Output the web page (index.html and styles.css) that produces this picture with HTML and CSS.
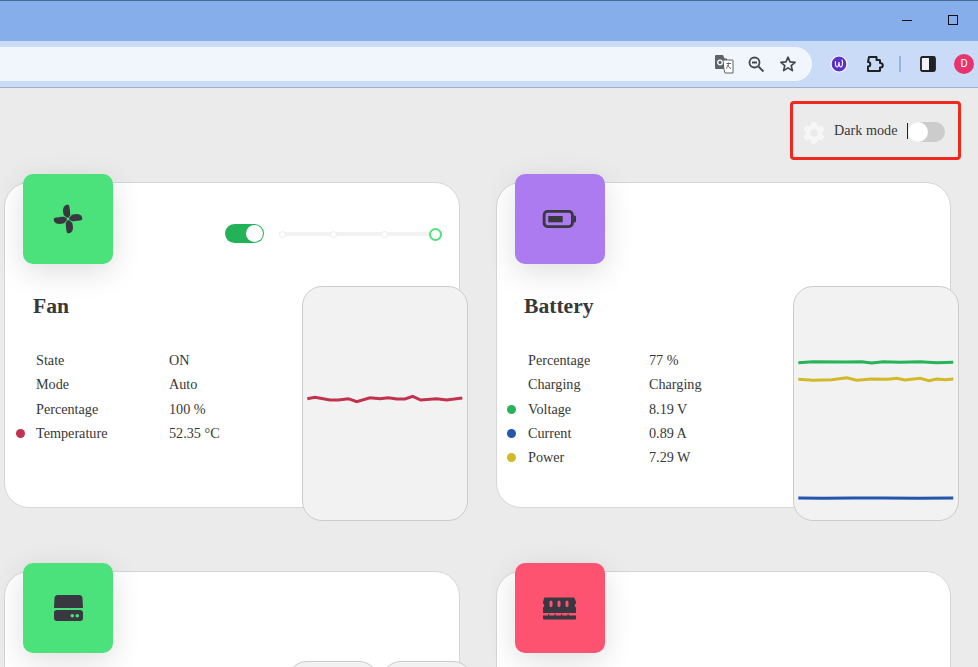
FILE: index.html
```html
<!doctype html>
<html lang="en">

<head>
    <meta charset="UTF-8">
    <meta name="viewport" content="width=device-width, initial-scale=1.0">
    <title>Dashboard</title>
    <link rel="stylesheet" href="styles.css">
</head>

<body>
    <div class="titlebar">
        <span class="win-min"></span>
        <span class="win-max"></span>
    </div>

    <div class="toolbar">
        <div class="omnibox">
            <svg class="tb-icon" viewBox="0 0 24 24">
                <path class="ink-grey" d="M4 3h7l1.500 3.500H15V17H4a1 1 0 0 1-1-1V4a1 1 0 0 1 1-1z" />
                <path class="ink-white" d="M11 8h9.500a.5.500 0 0 1 .5.500V21h-8l-1-3.500z" stroke="#5f6368" stroke-width="1" />
                <circle cx="8" cy="10.500" r="2.300" fill="none" stroke="#fff" stroke-width="1.300" />
                <path d="M14.500 11.500h4.500M16.500 10.500c.2 3-1 5-2.500 6M15.500 13c.8 1.800 2 3 3.500 3.500" fill="none" stroke="#5f6368" stroke-width="1" />
            </svg>
            <svg class="tb-icon" viewBox="0 0 24 24">
                <circle cx="10.500" cy="10.500" r="5" fill="none" stroke="#45494e" stroke-width="1.800" />
                <path d="M8 10.500h5M14.500 14.500l5 5" fill="none" stroke="#45494e" stroke-width="1.800" />
            </svg>
            <svg class="tb-icon" viewBox="0 0 24 24">
                <path d="M12 5.200l2 4.700 5.100.4-3.900 3.300 1.200 5-4.400-2.700-4.400 2.700 1.200-5-3.900-3.300 5.100-.4z" fill="none" stroke="#45494e" stroke-width="1.700" stroke-linejoin="round" />
            </svg>
        </div>
        <svg class="tb-icon ext" viewBox="0 0 24 24">
            <circle cx="12" cy="12" r="8" fill="#5a32c6" stroke="#fff" stroke-width="1.200" />
            <path d="M8.500 9.500c-.3 3 .3 5.500 1.500 5.500s1.800-2.500 2-5c.1 2.500.6 5 1.800 5 1.500 0 2.400-4 1.200-7" fill="none" stroke="#fff" stroke-width="1.100" stroke-linecap="round" />
        </svg>
        <svg class="tb-icon puzzle" viewBox="0 0 24 24">
            <path d="M6 5h7.500v3h3a.5.500 0 0 1 .5.500v2.500h.5a2.300 2.300 0 0 1 0 4.600H17v3a.5.500 0 0 1-.5.500H5v-4.500a2.300 2.300 0 0 0 0-4.600z" fill="none" stroke="#202124" stroke-width="2" stroke-linejoin="round" />
        </svg>
        <span class="tb-divider"></span>
        <svg class="tb-icon panel" viewBox="0 0 24 24">
            <rect x="5" y="5" width="14" height="14" rx="1.500" fill="#f1f5fb" stroke="#202124" stroke-width="1.800" />
            <path d="M13 5h4.500A1.500 1.500 0 0 1 19 6.500v11a1.500 1.500 0 0 1-1.500 1.500H13z" fill="#202124" />
        </svg>
        <span class="avatar">D</span>
    </div>

    <main class="page">
        <div class="topline">
            <div class="darkbox">
                <svg class="gear" viewBox="0 0 24 24">
                    <path d="M12,15.5A3.5,3.5 0 0,1 8.5,12A3.5,3.5 0 0,1 12,8.5A3.5,3.5 0 0,1 15.5,12A3.5,3.5 0 0,1 12,15.5M19.43,12.97C19.47,12.65 19.5,12.33 19.5,12C19.5,11.67 19.47,11.34 19.43,11L21.54,9.37C21.73,9.22 21.78,8.95 21.66,8.73L19.66,5.27C19.54,5.05 19.27,4.96 19.05,5.05L16.56,6.05C16.04,5.66 15.5,5.32 14.87,5.07L14.5,2.42C14.46,2.18 14.25,2 14,2H10C9.75,2 9.54,2.18 9.5,2.42L9.13,5.07C8.5,5.32 7.96,5.66 7.44,6.05L4.95,5.05C4.73,4.96 4.46,5.05 4.34,5.27L2.34,8.73C2.21,8.95 2.27,9.22 2.46,9.37L4.57,11C4.53,11.34 4.5,11.67 4.5,12C4.5,12.33 4.53,12.65 4.57,12.97L2.46,14.63C2.27,14.78 2.21,15.05 2.34,15.27L4.34,18.73C4.46,18.95 4.73,19.03 4.95,18.95L7.44,17.94C7.96,18.34 8.5,18.68 9.13,18.93L9.5,21.58C9.54,21.82 9.75,22 10,22H14C14.25,22 14.46,21.82 14.5,21.58L14.87,18.93C15.5,18.67 16.04,18.34 16.56,17.94L19.05,18.95C19.27,19.03 19.54,18.95 19.66,18.73L21.66,15.27C21.78,15.05 21.73,14.78 21.54,14.63L19.43,12.97Z" />
                </svg>
                <span class="darkbox-label">Dark mode</span>
                <span class="caret"></span>
                <span class="switch"><span class="knob"></span></span>
            </div>
        </div>

        <div class="cards">
            <section class="card card-fan">
                <div class="card-head">
                    <div class="tile tile-green">
                        <svg class="tile-icon" viewBox="0 0 36 36">
                            <path d="M18 18L13.700 14C13 11 12.500 8 13.800 6C15 4 17 3.500 18.500 3.800C19.500 4.500 20 9 20.300 14z" />
                            <path d="M18 18L13.700 14C13 11 12.500 8 13.800 6C15 4 17 3.500 18.500 3.800C19.500 4.500 20 9 20.300 14z" transform="rotate(90 18 18)" />
                            <path d="M18 18L13.700 14C13 11 12.500 8 13.800 6C15 4 17 3.500 18.500 3.800C19.500 4.500 20 9 20.300 14z" transform="rotate(180 18 18)" />
                            <path d="M18 18L13.700 14C13 11 12.500 8 13.800 6C15 4 17 3.500 18.500 3.800C19.500 4.500 20 9 20.300 14z" transform="rotate(270 18 18)" />
                            <circle class="hole-green" cx="18" cy="18" r="1.400" />
                        </svg>
                    </div>
                    <div class="controls">
                        <span class="switch-on"><span class="knob-on"></span></span>
                        <div class="steps">
                            <span class="step"></span>
                            <span class="step"></span>
                            <span class="step"></span>
                            <span class="step-end"></span>
                        </div>
                    </div>
                </div>
                <div class="card-body">
                    <div class="info">
                        <h2>Fan</h2>
                        <table>
                            <tr><td class="dot-cell"></td><td class="label">State</td><td>ON</td></tr>
                            <tr><td class="dot-cell"></td><td class="label">Mode</td><td>Auto</td></tr>
                            <tr><td class="dot-cell"></td><td class="label">Percentage</td><td>100 %</td></tr>
                            <tr><td class="dot-cell"><span class="dot dot-red"></span></td><td class="label">Temperature</td><td>52.35 °C</td></tr>
                        </table>
                    </div>
                    <div class="chart">
                        <svg viewBox="1 1 164 233">
                            <polyline class="line line-red" points="5.300,112.700 13,111.300 28,114 36.300,114 46.300,112.700 54.700,115.700 68,111.700 78,112.700 86.300,111.700 94.700,113 103,113 110.700,110.300 118.700,114 134.700,112.700 144.700,114 160.300,112" />
                        </svg>
                    </div>
                </div>
            </section>

            <section class="card card-battery">
                <div class="card-head">
                    <div class="tile tile-purple">
                        <svg class="tile-icon" viewBox="0 0 36 36">
                            <rect x="2.100" y="10.400" width="28.300" height="15.200" rx="3.500" fill="none" stroke="#39373f" stroke-width="2.800" />
                            <path d="M31.500 14.500h1a1.500 1.500 0 0 1 1.500 1.500v4a1.500 1.500 0 0 1-1.500 1.500h-1z" />
                            <rect x="6.300" y="15" width="14.400" height="6.300" />
                        </svg>
                    </div>
                </div>
                <div class="card-body">
                    <div class="info">
                        <h2>Battery</h2>
                        <table>
                            <tr><td class="dot-cell"></td><td class="label">Percentage</td><td>77 %</td></tr>
                            <tr><td class="dot-cell"></td><td class="label">Charging</td><td>Charging</td></tr>
                            <tr><td class="dot-cell"><span class="dot dot-green"></span></td><td class="label">Voltage</td><td>8.19 V</td></tr>
                            <tr><td class="dot-cell"><span class="dot dot-blue"></span></td><td class="label">Current</td><td>0.89 A</td></tr>
                            <tr><td class="dot-cell"><span class="dot dot-yellow"></span></td><td class="label">Power</td><td>7.29 W</td></tr>
                        </table>
                    </div>
                    <div class="chart">
                        <svg viewBox="1 1 164 233">
                            <polyline class="line line-green" points="5.300,76.700 20.300,75.700 53.700,76 68.700,75.700 78.700,77 90.300,75.700 107,76.300 127,75.700 143.700,76.700 160.300,76.300" />
                            <polyline class="line line-yellow" points="5.300,93.300 20.300,94.300 38.700,93.700 53.700,91.700 63.700,94.300 78.700,93 95.300,93.300 103.700,92.300 112,94 127,92.300 136,94.700 143.700,93 152,93.700 160.300,93" />
                            <polyline class="line line-blue" points="5.300,212 30,212.300 60,212 90,212 125,212.300 160.300,212" />
                        </svg>
                    </div>
                </div>
            </section>

            <section class="card card-storage">
                <div class="card-head">
                    <div class="tile tile-green">
                        <svg class="tile-icon" viewBox="0 0 36 36">
                            <path d="M8 5h21a3.500 3.500 0 0 1 3.500 3.500L33 18H4l.5-9.500A3.500 3.500 0 0 1 8 5z" />
                            <rect x="4" y="20" width="29" height="11" rx="3" />
                            <circle class="hole-green" cx="22.300" cy="25.700" r="1.800" />
                            <circle class="hole-green" cx="27.300" cy="25.700" r="1.800" />
                        </svg>
                    </div>
                </div>
                <div class="card-body card-body-tight">
                    <div class="info"></div>
                    <div class="minis">
                        <div class="mini"></div>
                        <div class="mini"></div>
                    </div>
                </div>
            </section>

            <section class="card card-memory">
                <div class="card-head">
                    <div class="tile tile-red">
                        <svg class="tile-icon" viewBox="0 0 36 36">
                            <path fill-rule="evenodd" d="M3 7.500h28.500a1 1 0 0 1 1 .7L34 12v1.500a2.200 2.200 0 0 0 0 4V23H1v-5.500a2.200 2.200 0 0 0 0-4V12l1-3.800a1 1 0 0 1 1-.7zM9 10.500a1.500 1.500 0 0 0-1.500 1.500v3.500a1.500 1.500 0 0 0 3 0V12a1.500 1.500 0 0 0-1.500-1.500zM17 10.500a1.500 1.500 0 0 0-1.500 1.500v3.500a1.500 1.500 0 0 0 3 0V12a1.500 1.500 0 0 0-1.500-1.500zM25 10.500a1.500 1.500 0 0 0-1.500 1.500v3.500a1.500 1.500 0 0 0 3 0V12a1.500 1.500 0 0 0-1.500-1.500z" />
                            <path d="M1 25.500h5v-1.500h1.200v1.500h5.300v-1.500h1.200v1.500h5.300v-1.500h1.200v1.500h5.300v-1.500h1.200v1.500H34v3a1 1 0 0 1-1 1H2a1 1 0 0 1-1-1z" />
                        </svg>
                    </div>
                </div>
                <div class="card-body card-body-tight"></div>
            </section>
        </div>
    </main>
</body>

</html>
```

FILE: styles.css
```css
* {
    font-family: "Liberation Serif", serif;
    box-sizing: border-box;
}

html,
body {
    height: 667px;
}

body {
    background-color: #ebebeb;
    margin: 0;
    overflow: hidden;
    color: #383838;
    font-size: 14.2px;
}

/* browser chrome */
.titlebar {
    height: 41px;
    background-color: #85aeea;
    border-top: 1px solid #4d6a96;
    display: flex;
    align-items: center;
    justify-content: flex-end;
    padding-right: 20px;
    padding-bottom: 2px;
    gap: 36px;
}

.win-min {
    width: 10px;
    height: 1px;
    background: #111;
}

.win-max {
    width: 10px;
    height: 10px;
    border: 1px solid #111;
}

.toolbar {
    height: 47px;
    background-color: #c9dbf6;
    border-bottom: 1px solid #a1b2cb;
    display: flex;
    align-items: center;
}

.omnibox {
    width: 812px;
    height: 34px;
    background-color: #f1f6fd;
    border-radius: 0 17px 17px 0;
    display: flex;
    align-items: center;
    justify-content: flex-end;
    gap: 8px;
    padding-right: 12px;
    flex-shrink: 0;
}

.tb-icon {
    width: 24px;
    height: 24px;
    flex-shrink: 0;
}

.ink-grey {
    fill: #5f6368;
}

.ink-white {
    fill: #fff;
}

.ext {
    margin-left: 15px;
}

.puzzle {
    margin-left: 12px;
}

.tb-divider {
    width: 2px;
    height: 16px;
    background: #8fb4e8;
    margin-left: 12px;
}

.panel {
    margin-left: 15px;
}

.avatar {
    width: 20px;
    height: 20px;
    margin-left: 14px;
    border-radius: 50%;
    background: #e8336f;
    color: #fff;
    font-family: "Roboto", sans-serif;
    font-size: 11px;
    line-height: 20px;
    text-align: center;
}

/* page */
.topline {
    display: flex;
    justify-content: flex-end;
    padding: 13px 17px 22px 0;
}

.darkbox {
    width: 171px;
    height: 59px;
    border: 3px solid #f0281e;
    border-radius: 4px;
    display: flex;
    align-items: center;
    padding-left: 8px;
}

.gear {
    width: 26px;
    height: 26px;
    fill: #f6f6f6;
    margin-top: 4px;
}

.darkbox-label {
    margin-left: 7px;
}

.caret {
    width: 1px;
    height: 16px;
    background: #222;
    margin-left: 10px;
    margin-top: 1px;
}

.switch {
    width: 37px;
    height: 20px;
    border-radius: 10px;
    background: #ccc;
    margin-top: 3px;
}

.knob {
    display: block;
    width: 20px;
    height: 20px;
    border-radius: 50%;
    background: #fff;
}

.cards {
    display: grid;
    grid-template-columns: 456px 455px;
    column-gap: 36px;
    row-gap: 63px;
    padding-left: 4px;
}

.card {
    height: 326px;
    background: white;
    border: 1px solid #d6d6d6;
    border-radius: 25px;
}

.card-head {
    display: flex;
    justify-content: space-between;
    margin-top: -9px;
    height: 90px;
    padding-right: 17px;
    padding-left: 18px;
}

.tile {
    width: 90px;
    height: 90px;
    border-radius: 10px;
    display: flex;
    align-items: center;
    justify-content: center;
    box-shadow: 0 8px 30px rgba(0, 0, 0, 0.13);
}

.tile-green {
    background-color: #4be27c;
}

.tile-purple {
    background-color: #ac7bf0;
}

.tile-red {
    background-color: #fd5270;
}

.tile-icon {
    width: 36px;
    height: 36px;
    fill: #39373f;
}

.hole-green {
    fill: #4be27c;
}

.controls {
    display: flex;
    align-items: center;
    gap: 15px;
    margin-top: 49px;
    height: 20px;
}

.switch-on {
    width: 39px;
    height: 19px;
    border-radius: 10px;
    background: #22b257;
    display: flex;
    justify-content: flex-end;
    align-items: center;
    padding-right: 1px;
}

.knob-on {
    width: 17px;
    height: 17px;
    border-radius: 50%;
    background: #fff;
}

.steps {
    width: 163px;
    height: 13px;
    margin-top: 2px;
    display: flex;
    align-items: center;
    gap: 44px;
    background: linear-gradient(#f2f2f2, #f2f2f2) center / 100% 4px no-repeat;
}

.step {
    width: 7px;
    height: 7px;
    border-radius: 50%;
    background: #fff;
    border: 1px solid #ececec;
}

.step-end {
    width: 13px;
    height: 13px;
    margin-left: -3px;
    border-radius: 50%;
    background: #fff;
    border: 2px solid #4fe27f;
}

.card-body {
    display: flex;
    justify-content: space-between;
    margin-top: 22px;
}

.card-body-tight {
    margin-top: 8px;
}

.info {
    padding-top: 8px;
}

h2 {
    font-size: 21.6px;
    font-weight: bold;
    line-height: 25px;
    margin: 0 0 29.4px 27px;
}

.card-fan h2 {
    margin-left: 28px;
}

table {
    border-collapse: collapse;
    margin-left: 10px;
}

.card-fan table {
    margin-left: 11px;
}

td {
    padding: 0;
    height: 24.33px;
}

.dot-cell {
    width: 21px;
    font-size: 0;
}

.card-fan .dot-cell {
    width: 20px;
}

.dot {
    display: inline-block;
    width: 9px;
    height: 9px;
    border-radius: 50%;
}

.dot-red {
    background: #c0324e;
}

.dot-green {
    background: #27b35a;
}

.dot-blue {
    background: #2456ac;
}

.dot-yellow {
    background: #d2b928;
}

.card-fan .label {
    width: 133px;
}

.card-battery .label {
    width: 121px;
}

.chart {
    width: 166px;
    height: 235px;
    margin-right: -9px;
    background: #f2f2f2;
    border: 1px solid #ccc;
    border-radius: 20px;
    flex-shrink: 0;
}

.chart svg {
    display: block;
    width: 100%;
    height: 100%;
}

.line {
    fill: none;
    stroke-width: 3;
}

.line-red {
    stroke: #c0324e;
}

.line-green {
    stroke: #27b35a;
}

.line-yellow {
    stroke: #d2b928;
}

.line-blue {
    stroke: #2456ac;
}

.minis {
    display: flex;
    gap: 2px;
    margin-right: -14px;
}

.mini {
    width: 92px;
    height: 120px;
    background: #f2f2f2;
    border: 1px solid #ccc;
    border-radius: 20px;
}
```
